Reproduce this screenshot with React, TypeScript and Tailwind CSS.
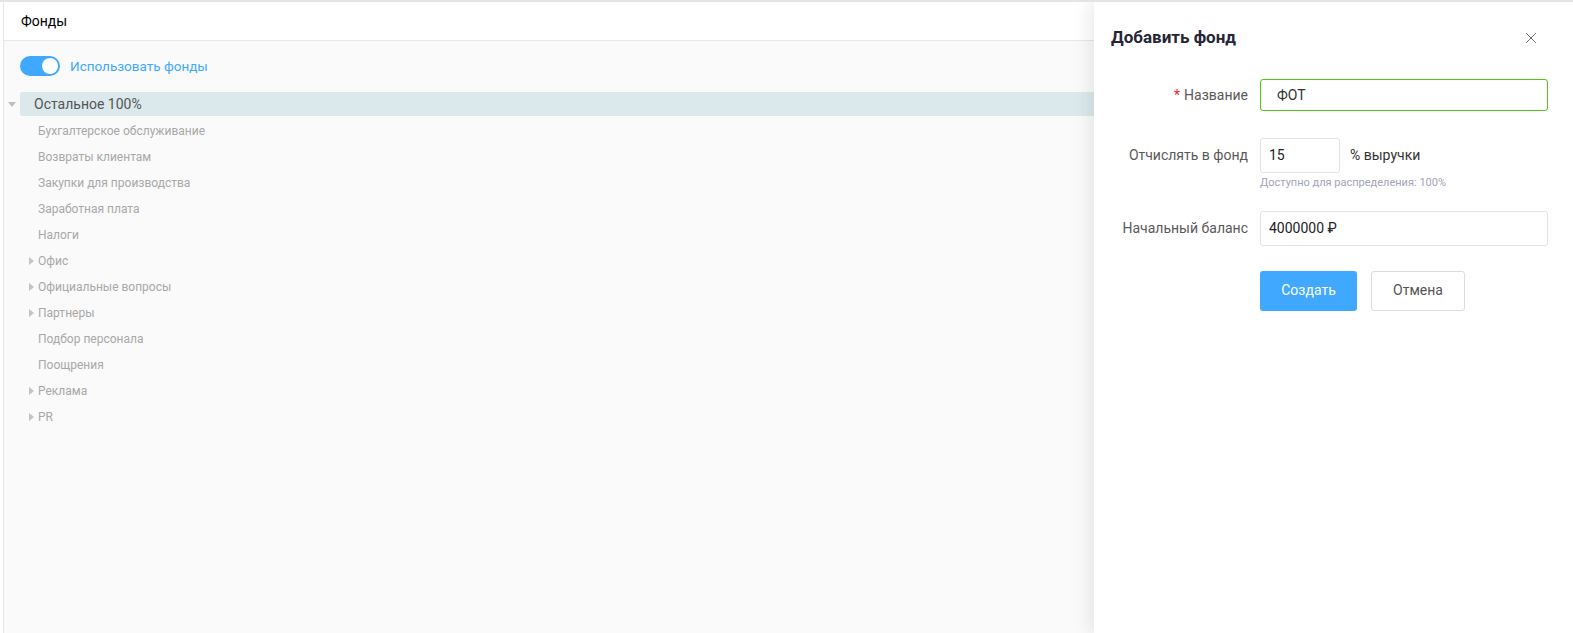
import { X } from 'lucide-react';

const items = [
  { name: 'Бухгалтерское обслуживание', caret: false },
  { name: 'Возвраты клиентам', caret: false },
  { name: 'Закупки для производства', caret: false },
  { name: 'Заработная плата', caret: false },
  { name: 'Налоги', caret: false },
  { name: 'Офис', caret: true },
  { name: 'Официальные вопросы', caret: true },
  { name: 'Партнеры', caret: true },
  { name: 'Подбор персонала', caret: false },
  { name: 'Поощрения', caret: false },
  { name: 'Реклама', caret: true },
  { name: 'PR', caret: true },
];

export default function App() {
  return (
    <div className="h-screen w-full overflow-hidden border-t-2 border-[#e4e4e4] bg-white font-['Roboto',sans-serif] flex">
      {/* Page */}
      <div className="ml-[3px] flex-1 border-l border-[#e6e6e6] flex flex-col bg-[#fafafa]">
        <div className="h-[39px] bg-white border-b border-[#e8e8e8] flex items-center px-[17px] text-[14px] text-black">
          Фонды
        </div>
        <div className="pt-[14px]">
          <div className="flex items-center gap-[10px] pl-[16px] h-[22px]">
            <div className="w-[40px] h-[20px] rounded-full bg-[#40a9ff] flex items-center justify-end px-[2px]">
              <div className="w-[16px] h-[16px] rounded-full bg-white" />
            </div>
            <span className="text-[13.5px] text-[#40a9ff]">Использовать фонды</span>
          </div>
          <div className="mt-[15px] flex items-center h-[24px]">
            <div className="w-[16px] flex justify-center">
              <span className="block w-0 h-0 border-l-[4px] border-r-[4px] border-t-[5px] border-l-transparent border-r-transparent border-t-[#bfbfbf]" />
            </div>
            <div className="flex-1 h-full bg-[#dbe9ed] rounded-l-[2px] flex items-center pl-[14px] text-[14px] text-[#555]">
              Остальное 100%
            </div>
          </div>
          <div className="mt-[2px]">
            {items.map((it) => (
              <div key={it.name} className="h-[26px] flex items-center pl-[25px]">
                <div className="w-[9px] flex items-center">
                  {it.caret && (
                    <span className="block w-0 h-0 border-t-[4px] border-b-[4px] border-l-[5px] border-t-transparent border-b-transparent border-l-[#c4c4c4]" />
                  )}
                </div>
                <span className="text-[12px] text-[#a8a8a8]">{it.name}</span>
              </div>
            ))}
          </div>
        </div>
      </div>

      {/* Drawer */}
      <div className="w-[479px] shrink-0 bg-white shadow-[-6px_0_16px_rgba(0,0,0,0.08)] relative px-[17px] pt-[24px]">
        <div className="flex items-center justify-between h-[24px]">
          <span className="text-[17px] font-bold text-[#262636]">Добавить фонд</span>
          <X size={18} strokeWidth={1.3} className="text-[#666] mr-[16px]" />
        </div>

        <div className="mt-[29px] flex flex-col">
          <div className="flex items-center">
            <label className="w-[149px] shrink-0 whitespace-nowrap text-right pr-[12px] text-[14px] text-[#595959]">
              <span className="text-[#f5222d] mr-[4px]">*</span>Название
            </label>
            <div className="w-[288px] h-[32px] border border-[#52c41a] rounded-[3px] flex items-center pl-[16px] text-[14px] text-[#333]">
              ФОТ
            </div>
          </div>

          <div className="mt-[27px] flex items-start">
            <label className="w-[149px] shrink-0 whitespace-nowrap h-[35px] flex items-center justify-end pr-[12px] text-[14px] text-[#595959]">
              Отчислять в фонд
            </label>
            <div className="flex flex-col">
              <div className="flex items-center">
                <div className="w-[80px] h-[35px] border border-[#e3e3e3] rounded-[3px] flex items-center pl-[8px] text-[14px] text-[#222]">
                  15
                </div>
                <span className="ml-[10px] text-[14px] text-[#333]">% выручки</span>
              </div>
              <span className="mt-[2px] text-[11px] text-[#a3a3bb]">Доступно для распределения: 100%</span>
            </div>
          </div>

          <div className="mt-[19px] flex items-center">
            <label className="w-[149px] shrink-0 whitespace-nowrap text-right pr-[12px] text-[14px] text-[#595959]">Начальный баланс</label>
            <div className="w-[288px] h-[35px] border border-[#e3e3e3] rounded-[3px] flex items-center pl-[8px] text-[14px] text-[#222]">
              4000000 ₽
            </div>
          </div>

          <div className="mt-[25px] flex items-center gap-[14px] pl-[149px]">
            <button className="w-[97px] h-[40px] rounded-[3px] bg-[#40a9ff] text-white text-[14px]">Создать</button>
            <button className="w-[94px] h-[40px] rounded-[3px] border border-[#dcdcdc] bg-white text-[#555] text-[14px]">Отмена</button>
          </div>
        </div>
      </div>
    </div>
  );
}
